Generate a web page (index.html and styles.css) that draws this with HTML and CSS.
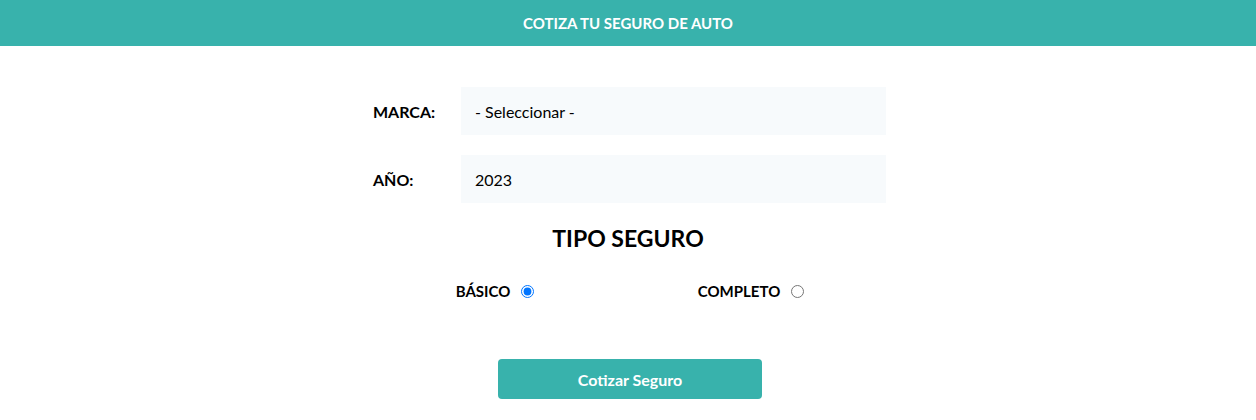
FILE: index.html
```html
<!DOCTYPE html>
<html lang="es">
<head>
<meta charset="utf-8">
<title>Cotizador</title>
<link rel="stylesheet" href="styles.css">
</head>
<body>
<header class="header">COTIZA TU SEGURO DE AUTO</header>
<form class="form">
  <div class="row">
    <label class="label">MARCA:</label>
    <select class="field"><option>- Seleccionar -</option></select>
  </div>
  <div class="row">
    <label class="label">AÑO:</label>
    <select class="field"><option>2023</option></select>
  </div>
  <h2 class="title">TIPO SEGURO</h2>
  <div class="radios">
    <label class="radio-group">BÁSICO <input type="radio" name="plan" checked></label>
    <label class="radio-group">COMPLETO <input type="radio" name="plan"></label>
  </div>
  <div class="actions">
    <button type="button" class="btn">Cotizar Seguro</button>
  </div>
</form>
</body>
</html>
```
FILE: styles.css
```css
* { box-sizing: border-box; }
body {
  margin: 0;
  font-family: Lato, "Noto Sans", sans-serif;
  color: #000;
  background: #fff;
}
.header {
  height: 46px;
  background: #38b2ac;
  color: #fff;
  font-weight: 700;
  font-size: 15px;
  display: flex;
  align-items: center;
  justify-content: center;
}
.form {
  width: 516px;
  margin: 41px auto 0;
}
.row {
  display: flex;
  align-items: center;
  margin-bottom: 20px;
}
.label {
  flex: 0 0 91px;
  padding-left: 3px;
  font-weight: 700;
  font-size: 16px;
}
.field {
  flex: 1;
  height: 48px;
  border: none;
  background: #f7fafc;
  -webkit-appearance: none;
  appearance: none;
  padding: 0 14px;
  font-family: inherit;
  font-size: 16px;
  color: #000;
  border-radius: 0;
}
.title {
  margin: 6px 0 0;
  text-align: center;
  font-size: 23px;
  font-weight: 700;
  line-height: 30px;
}
.radios {
  display: flex;
  justify-content: space-around;
  margin-top: 29px;
  padding-left: 4px;
}
.radio-group {
  font-weight: 700;
  font-size: 15px;
  display: flex;
  align-items: center;
}
.radio-group input {
  margin: 0 0 0 11px;
  width: 13px;
  height: 13px;
}
.actions {
  display: flex;
  justify-content: center;
  margin-top: 59px;
}
.btn {
  width: 264px;
  height: 40px;
  border: none;
  border-radius: 4px;
  background: #38b2ac;
  color: #fff;
  font-family: inherit;
  font-weight: 700;
  font-size: 16px;
  margin-left: 4px;
}
```
